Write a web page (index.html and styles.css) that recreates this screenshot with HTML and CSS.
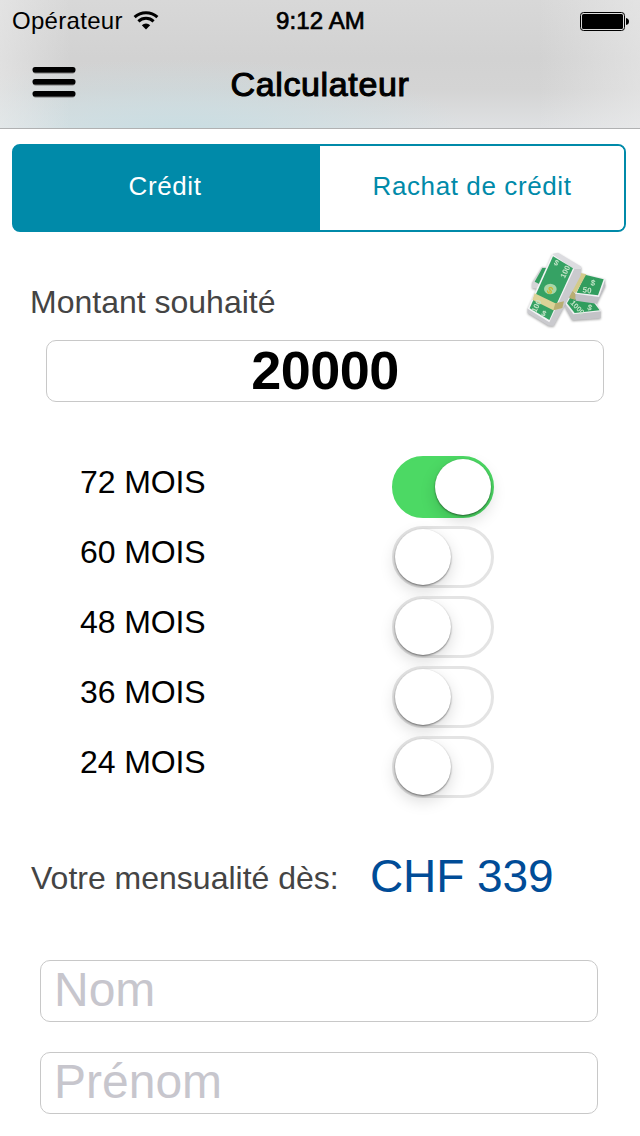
FILE: index.html
```html
<!DOCTYPE html>
<html lang="fr">
<head>
    <meta charset="utf-8">
    <meta name="viewport" content="width=device-width, initial-scale=1">
    <title>Calculateur</title>
    <link rel="stylesheet" href="styles.css">
</head>
<body>
    <header>
        <div class="status-bar">
            <div class="carrier">
                <span>Opérateur</span>
                <svg class="wifi" width="26" height="19" viewBox="0 0 26 19">
                    <path d="M1.6 6.2 A16.5 16.5 0 0 1 24.4 6.2" fill="none" stroke="#000" stroke-width="3"/>
                    <path d="M5.4 10.4 A11 11 0 0 1 20.6 10.4" fill="none" stroke="#000" stroke-width="3"/>
                    <path d="M8.8 14.2 A6.2 6.2 0 0 1 17.2 14.2 L13 18.4 Z"/>
                </svg>
            </div>
            <span class="time">9:12 AM</span>
            <svg class="battery" width="49" height="19" viewBox="0 0 49 19">
                <rect x="0.5" y="0.5" width="44" height="18" rx="3" fill="none" stroke="#000"/>
                <rect x="2" y="2" width="41" height="15" rx="1.5"/>
                <path d="M46 6 Q49 6.5 49 9.5 Q49 12.5 46 13 Z"/>
            </svg>
        </div>
        <nav class="nav-bar">
            <svg class="menu" width="44" height="32" viewBox="0 0 44 32">
                <g fill="#777">
                    <rect x="1" y="2" width="42" height="5.6" rx="2.5"/>
                    <rect x="1" y="14" width="42" height="5.6" rx="2.5"/>
                    <rect x="1" y="26" width="42" height="5.6" rx="2.5"/>
                </g>
                <rect x="0.5" y="1" width="43" height="5.6" rx="2.5"/>
                <rect x="0.5" y="13" width="43" height="5.6" rx="2.5"/>
                <rect x="0.5" y="25" width="43" height="5.6" rx="2.5"/>
            </svg>
            <h1>Calculateur</h1>
        </nav>
    </header>

    <main>
        <div class="tabs">
            <div class="tab active">Crédit</div>
            <div class="tab">Rachat de crédit</div>
        </div>

        <section class="amount">
            <div class="amount-head">
                <label for="amount">Montant souhaité</label>
                <svg class="money" width="80" height="80" viewBox="48 30 240 240">
                    <!-- back bundle -->
                    <path d="M66 128 L96 80 L114 82 L104 150 L66 144 Z" fill="#d4d4d6"/>
                    <path d="M74 125 L97 84 L114 84 L92 134 Z" fill="#319d5e"/>
                    <!-- lower right bundle -->
                    <path d="M166 203 L187 241 L272 235 L272 212 L186 218 L167 186 Z" fill="#c3c3c7"/>
                    <path d="M165 190 L176 172 L250 178 L274 214 L190 223 Z" fill="#f0f0f2"/>
                    <path d="M171 190 L180 174 L246 180 L269 211 L194 219 Z" fill="#319d5e"/>
                    <!-- upper right bundle -->
                    <path d="M176 142 L198 162 L196 180 L178 174 Z" fill="#b8ae72"/>
                    <path d="M196 160 L267 168 L284 118 L286 138 L260 191 L197 182 Z" fill="#c0c0c5"/>
                    <path d="M204 98 L286 117 L267 171 L196 161 L180 138 Z" fill="#f2f2f4"/>
                    <path d="M225 104 L281 118 L264 166 L200 158 Z" fill="#319d5e"/>
                    <path d="M202 97 L229 103 L198 159 L176 148 Z" fill="#d3cb8b"/>
                    <!-- front bundle -->
                    <path d="M116 240 L192 84 L214 84 L212 107 L131 258 L116 257 L53 219 L53 205 Z" fill="#cacace"/>
                    <path d="M127 42 L194 84 L118 247 L53 206 Z" fill="#f4f4f6"/>
                    <path d="M127 42 L144 38 L214 80 L213 87 L191 87 Z" fill="#dcdce0"/>
                    <path d="M129 49 L189 85 L118 240 L59 205 Z" fill="#36a264"/>
                    <path d="M74 160 L136 190 L158 188 L155 205 L130 211 L67 179 Z" fill="#dcd397"/>
                    <path d="M136 190 L162 184 L157 204 L130 211 Z" fill="#b8ae72"/>
                    <ellipse cx="121" cy="147" rx="19" ry="16" fill="#a9d6a8"/>
                    <g class="money-text">
                        <text transform="translate(108 156) rotate(28)" font-size="30" fill="#c8b731">$</text>
                        <text transform="translate(130 72) rotate(29)" font-size="23">$</text>
                        <text transform="translate(164 116) rotate(-64)" font-size="23">100</text>
                        <text transform="translate(78 219) rotate(-64)" font-size="23">100</text>
                        <text transform="translate(92 224) rotate(28)" font-size="23">$</text>
                        <text transform="translate(241 135) rotate(12)" font-size="24">$</text>
                        <text transform="translate(217 157) rotate(8)" font-size="24">50</text>
                        <text transform="translate(180 190) rotate(46)" font-size="22">1000</text>
                        <text transform="translate(230 208) rotate(20)" font-size="24">$</text>
                    </g>
                </svg>
            </div>
            <input class="field amount-field" id="amount" type="text" value="20000">
        </section>

        <section class="durations">
            <div class="duration"><label for="m72">72 MOIS</label><input class="switch" id="m72" type="checkbox" checked></div>
            <div class="duration"><label for="m60">60 MOIS</label><input class="switch" id="m60" type="checkbox"></div>
            <div class="duration"><label for="m48">48 MOIS</label><input class="switch" id="m48" type="checkbox"></div>
            <div class="duration"><label for="m36">36 MOIS</label><input class="switch" id="m36" type="checkbox"></div>
            <div class="duration"><label for="m24">24 MOIS</label><input class="switch" id="m24" type="checkbox"></div>
        </section>

        <section class="result">
            <span class="result-label">Votre mensualité dès:</span>
            <span class="result-value">CHF 339</span>
        </section>

        <section class="contact">
            <input class="field" type="text" placeholder="Nom">
            <input class="field" type="text" placeholder="Prénom">
        </section>
    </main>
</body>
</html>
```
FILE: styles.css
```css
* {
    box-sizing: border-box;
}

html, body {
    height: 100%;
    margin: 0;
}

body {
    background: #fff;
    color: #000;
    font-family: "Liberation Sans", Arial, sans-serif;
    font-size: 32px;
    overflow: hidden;
}

header {
    height: 129px;
    border-bottom: 1px solid #b0b1b2;
    background:
        linear-gradient(to right, rgba(238, 238, 238, 0.5), rgba(238, 238, 238, 0) 11%, rgba(238, 238, 238, 0) 84%, rgba(238, 238, 238, 0.5)),
        radial-gradient(ellipse 290px 75px at 180px 134px, #c8dde2, rgba(202, 221, 226, 0)),
        linear-gradient(#d8d8d8, #d2d2d2 45%, #d4d4d4 70%, #dfe1e3);
}

.status-bar {
    display: grid;
    grid-template-columns: 1fr auto 1fr;
    align-items: center;
    height: 40px;
    padding: 0 11px 0 12px;
    font-size: 24px;
    line-height: 40px;
}

.carrier {
    display: flex;
    align-items: center;
    gap: 10px;
    letter-spacing: 0.3px;
}

.carrier span {
    padding-top: 1px;
}

.time {
    padding-top: 1px;
    letter-spacing: 0.1px;
    -webkit-text-stroke: 0.7px #000;
}

.battery {
    justify-self: end;
    margin-top: 1px;
}

.nav-bar {
    display: grid;
    grid-template-columns: 44px 1fr 44px;
    align-items: center;
    height: 88px;
    padding: 0 32px;
}

.menu {
    margin-bottom: 4px;
}

h1 {
    margin: 0;
    font-size: 34px;
    font-weight: normal;
    letter-spacing: 0.65px;
    text-align: center;
    -webkit-text-stroke: 1.1px #000;
}

.tabs {
    display: grid;
    grid-template-columns: 306px 1fr;
    height: 88px;
    margin: 15px 14px 0 12px;
    border: 2px solid #008aa9;
    border-radius: 8px;
    background: linear-gradient(to right, #008aa9 50%, #fff 50%);
    overflow: hidden;
}

.tab {
    background: #fff;
    color: #008aa9;
    font-size: 26px;
    line-height: 80px;
    letter-spacing: 0.6px;
    text-align: center;
}

.tab.active {
    padding-right: 4px;
    background: #008aa9;
    color: #fff;
}

.amount {
    padding: 18px 36px 0 30px;
}

.amount-head {
    display: flex;
    justify-content: space-between;
    height: 80px;
    margin-right: -2px;
    color: #444;
    line-height: 104px;
}

.money {
    filter: drop-shadow(0 1px 1px rgba(0, 0, 0, 0.35));
}

.money-text {
    fill: #c5e5c9;
    font-weight: bold;
}

.field {
    display: block;
    width: 558px;
    height: 62px;
    padding: 0 13px 4px;
    border: 1px solid #c8c8c8;
    border-radius: 10px;
    background: #fff;
    font: 48px "Liberation Sans", Arial, sans-serif;
}

.field::placeholder {
    color: #c7c6cd;
}

.amount-field {
    margin: 10px 0 0 16px;
    padding-bottom: 2px;
    font-size: 54px;
    font-weight: bold;
    letter-spacing: -0.5px;
    text-align: center;
}

.durations {
    display: grid;
    gap: 8px;
    margin-top: 54px;
    padding-left: 80px;
}

.duration {
    display: grid;
    grid-template-columns: 312px 102px;
    height: 62px;
    line-height: 52px;
    letter-spacing: -0.1px;
}

.switch {
    appearance: none;
    width: 102px;
    height: 62px;
    margin: 0;
    padding: 0;
    border: 3px solid #e4e4e4;
    border-radius: 31px;
    background: #fff;
}

.switch::before {
    content: "";
    display: block;
    width: 56px;
    height: 56px;
    border-radius: 50%;
    background: #fff;
    box-shadow: 0 1px 2px rgba(0, 0, 0, 0.5), 0 6px 16px rgba(0, 0, 0, 0.15);
}

.switch:checked {
    border-color: #4cd964;
    background: #4cd964;
}

.switch:checked::before {
    margin-left: 40px;
}

.result {
    display: flex;
    align-items: center;
    height: 60px;
    margin-top: 50px;
    padding-left: 31px;
}

.result-label {
    width: 339px;
    color: #444;
}

.result-value {
    margin-top: -4px;
    color: #004c97;
    font-size: 46px;
    letter-spacing: -0.1px;
}

.contact {
    display: grid;
    gap: 30px;
    margin: 52px 0 0 40px;
}
```
